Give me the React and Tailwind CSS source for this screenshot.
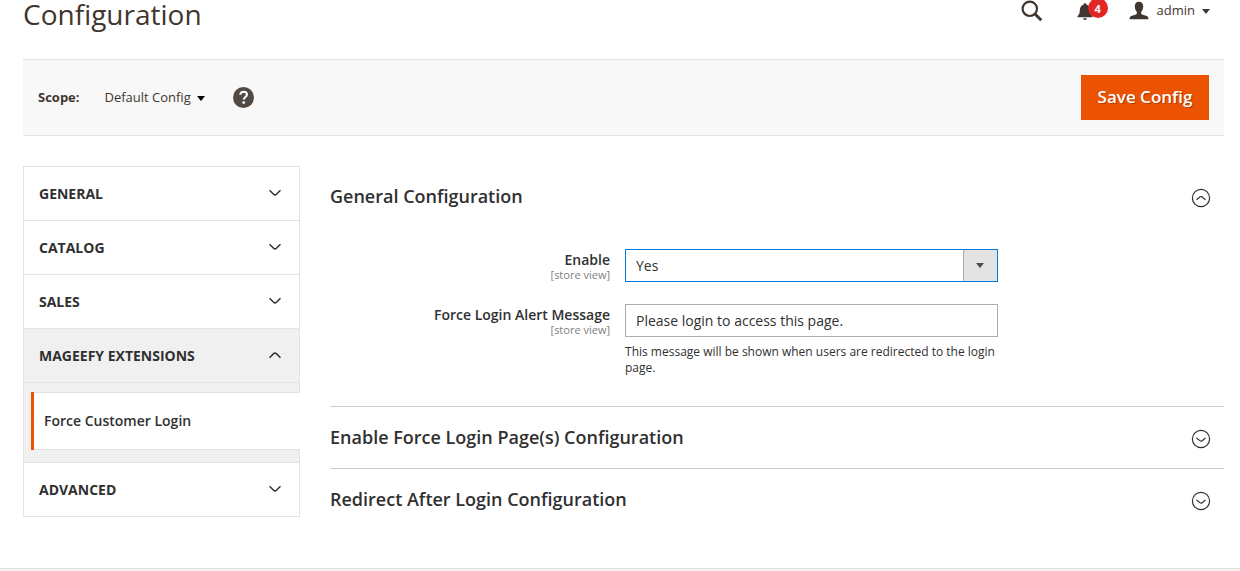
import { useState } from 'react';

const menu = [
    { title: 'General' },
    { title: 'Catalog' },
    { title: 'Sales' },
    { title: 'Mageefy Extensions', items: ['Force Customer Login'] },
    { title: 'Advanced' },
];

function Chevron({ up }) {
    return (
        <svg className="mb-px h-2 w-3" viewBox="0 0 12 8" fill="none" stroke="#303030" strokeWidth="1.5">
            {up ? <path d="M0.5 6.7 4.6 2.6Q6 1.3 7.4 2.6L11.5 6.7" /> : <path d="M0.5 1.3 4.6 5.2Q6 6.5 7.4 5.2L11.5 1.3" />}
        </svg>
    );
}

function CircleChevron({ up }) {
    return (
        <svg className="mt-[2px] size-5" viewBox="0 0 20 20" fill="none" stroke="#303030" strokeWidth="1.2">
            <circle cx="10" cy="10" r="8.6" />
            {up ? <path d="M5.5 11.7 9.2 8.8Q10 8.2 10.8 8.8L14.5 11.7" /> : <path d="M5.5 9 9.2 11.9Q10 12.5 10.8 11.9L14.5 9" />}
        </svg>
    );
}

function Caret({ className }) {
    return (
        <svg className={className} viewBox="0 0 8 5" fill="currentColor">
            <path d="M0 0h8L4 5z" />
        </svg>
    );
}

function Header() {
    return (
        <header className="flex h-[59px] items-start justify-between pr-[14px]">
            <h1 className="text-[28px] leading-7 text-[#41362f]">Configuration</h1>
            <div className="flex h-[22px] items-center text-[#41362f]">
                <button type="button" aria-label="Search" className="mr-[34px]">
                    <svg className="size-[22px]" viewBox="0 0 22 22" fill="none" stroke="currentColor">
                        <circle cx="8.8" cy="8.8" r="7.2" strokeWidth="2.2" />
                        <path d="M14 14 20.3 20.200" strokeWidth="3" />
                    </svg>
                </button>
                <a href="#notifications" aria-label="Notifications" className="relative mr-9">
                    <svg className="h-[22px] w-4" viewBox="0 0 16 22" fill="currentColor">
                        <path d="M8 3.2c.8 0 1.3.5 1.3 1.2 2.4.7 3.7 2.6 3.8 5.2.1 3.4.6 5 2.3 6.6.3.4.2 1-.4 1H1c-.6 0-.7-.6-.4-1 1.700-1.600 2.200-3.200 2.300-6.600.1-2.600 1.400-4.500 3.800-5.200 0-.7.5-1.200 1.300-1.200z" />
                        <path d="M6 18.300h4a2 1.800 0 0 1-4 0z" />
                    </svg>
                    <span className="absolute -top-[2px] left-[11px] flex size-5 items-center justify-center rounded-full bg-[#e22626] text-[11px] font-bold leading-none text-white">
                        4
                    </span>
                </a>
                <button type="button" className="flex items-center text-[13px]">
                    <svg className="mr-2 h-5 w-5" viewBox="0 0 20 20" fill="currentColor">
                        <path d="M10 .8c2.700 0 4.200 1.900 4.200 4.600 0 2.100-.8 4.200-2 5.300v1.700c0 .5.3.8.8 1l4.800 1.600c1 .4 1.600 1.300 1.600 2.700v.5H.6v-.5c0-1.400.6-2.300 1.600-2.700L7 13.400c.5-.2.8-.5.8-1v-1.700c-1.200-1.100-2-3.200-2-5.300C5.800 2.700 7.300.8 10 .8z" />
                    </svg>
                    admin
                    <Caret className="ml-[7px] h-[5px] w-2" />
                </button>
            </div>
        </header>
    );
}

function ScopeBar() {
    return (
        <div className="flex h-[77px] items-center border-y border-[#e3e3e3] bg-[#f8f8f8] px-[15px]">
            <span className="text-[13px] font-bold text-[#41362f]">Scope:</span>
            <button type="button" className="ml-[25px] flex items-center text-[13px] text-[#41362f]">
                Default Config
                <Caret className="ml-[6px] mt-[2px] h-[5px] w-2 text-black" />
            </button>
            <a href="#help" aria-label="What is this?" className="ml-7">
                <svg className="size-[21px]" viewBox="0 0 22 22">
                    <circle cx="11" cy="11" r="11" fill="#514943" />
                    <path d="M7.700 8.100C7.900 6 9.200 5 11.200 5c2 0 3.400 1.100 3.400 2.900 0 2.600-3.300 2.500-3.300 5.300" fill="none" stroke="#fff" strokeWidth="2.200" />
                    <circle cx="11.200" cy="16.300" r="1.500" fill="#fff" />
                </svg>
            </a>
            <button
                type="button"
                className="ml-auto h-[45px] min-w-32 bg-[#eb5202] px-4 pb-[2px] text-[17px] font-semibold text-white [text-shadow:1px_1px_0_rgba(0,0,0,0.25)]"
            >
                Save Config
            </button>
        </div>
    );
}

function Sidebar() {
    return (
        <nav className="w-[277px] shrink-0 border border-t-0 border-[#e3e3e3]">
            {menu.map(({ title, items }) => (
                <div key={title} className={items ? 'bg-[#f0f0f0]' : 'bg-white'}>
                    <button
                        type="button"
                        className="flex h-[54px] w-full items-center justify-between border-t border-[#e3e3e3] pl-[15px] pr-[18px] text-[14px] font-bold uppercase"
                    >
                        {title}
                        <Chevron up={!!items} />
                    </button>
                    {items && (
                        <ul className="-mr-px border-t border-[#e3e3e3] pb-3 pl-[7px] pt-[9px]">
                            {items.map((item) => (
                                <li key={item}>
                                    <a
                                        href="#force-login"
                                        className="flex h-[58px] border-l-[3px] border-[#eb5202] text-[14px] font-semibold leading-5"
                                    >
                                        <span className="flex flex-1 items-center border-y border-[#e3e3e3] bg-white pl-[10px]">{item}</span>
                                    </a>
                                </li>
                            ))}
                        </ul>
                    )}
                </div>
            ))}
        </nav>
    );
}

function Section({ title, open, onToggle, children }) {
    return (
        <section className="border-b border-[#cccccc] last:border-b-0">
            <h2>
                <button
                    type="button"
                    onClick={onToggle}
                    aria-expanded={open}
                    className="flex h-[61px] w-full items-center justify-between pr-[13px] text-left text-[18px] font-semibold"
                >
                    {title}
                    <CircleChevron up={open} />
                </button>
            </h2>
            {open && children}
        </section>
    );
}

function Field({ id, label, children }) {
    return (
        <div className="flex items-start">
            <label htmlFor={id} className="w-[33%] pr-[15px] pt-[3px] text-right text-[14px] font-semibold leading-4">
                {label}
                <span className="block text-[11px] font-normal leading-[14px] text-[#808080]">[store view]</span>
            </label>
            <div className="w-5/12">{children}</div>
        </div>
    );
}

export default function App() {
    const [open, setOpen] = useState({ general: true, pages: false, redirect: false });
    const [enabled, setEnabled] = useState('1');
    const [message, setMessage] = useState('Please login to access this page.');

    const toggle = (key) => setOpen({ ...open, [key]: !open[key] });

    return (
        <div className="flex min-h-screen flex-col bg-white font-['Open_Sans',sans-serif] text-[#303030]">
            <div className="pl-[23px] pr-4">
                <Header />
                <ScopeBar />
                <div className="flex items-start gap-[30px] pb-[38px] pt-[30px]">
                    <Sidebar />
                    <main className="min-w-0 flex-1">
                        <Section title="General Configuration" open={open.general} onToggle={() => toggle('general')}>
                            <div className="flex flex-col gap-[22px] pb-[30px] pt-[22px]">
                                <Field id="enable" label="Enable">
                                    <div className="relative">
                                        <select
                                            id="enable"
                                            value={enabled}
                                            onChange={(e) => setEnabled(e.target.value)}
                                            className="block h-[33px] w-full appearance-none border border-[#007bdb] bg-white px-[10px] text-[14px] outline-none"
                                        >
                                            <option value="1">Yes</option>
                                            <option value="0">No</option>
                                        </select>
                                        <span className="pointer-events-none absolute inset-y-px right-px flex w-[34px] items-center justify-center border-l border-[#adadad] bg-[#e3e3e3] text-[#514943]">
                                            <Caret className="h-[5px] w-2" />
                                        </span>
                                    </div>
                                </Field>
                                <Field id="message" label="Force Login Alert Message">
                                    <input
                                        id="message"
                                        type="text"
                                        value={message}
                                        onChange={(e) => setMessage(e.target.value)}
                                        className="block h-[33px] w-full border border-[#adadad] px-[10px] text-[14px] outline-none"
                                    />
                                    <p className="mt-[7px] text-[12px] leading-4">
                                        This message will be shown when users are redirected to the login page.
                                    </p>
                                </Field>
                            </div>
                        </Section>
                        <Section title="Enable Force Login Page(s) Configuration" open={open.pages} onToggle={() => toggle('pages')} />
                        <Section title="Redirect After Login Configuration" open={open.redirect} onToggle={() => toggle('redirect')} />
                    </main>
                </div>
            </div>
            <footer className="flex-1 border-t border-[#dddddd] bg-[#f5f5f5]" />
        </div>
    );
}
